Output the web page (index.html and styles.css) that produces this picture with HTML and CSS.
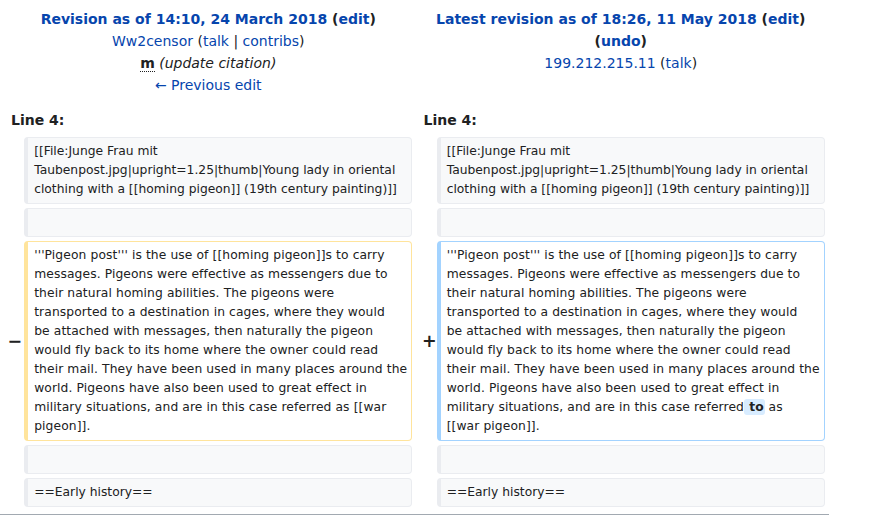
FILE: index.html
```html
<!DOCTYPE html>
<html>
<head>
<meta charset="utf-8">
<link rel="stylesheet" href="styles.css">
</head>
<body>
<div class="page">
<table class="diff">
  <colgroup>
    <col class="col-marker">
    <col class="col-content">
    <col class="col-marker">
    <col class="col-content">
  </colgroup>
  <tr class="title-row">
    <td colspan="2" class="title">
      <div><strong><a href="#">Revision as of 14:10, 24 March 2018</a> (<a href="#">edit</a>)</strong></div>
      <div><a href="#">Ww2censor</a> (<a href="#">talk</a> | <a href="#">contribs</a>)</div>
      <div><abbr class="minor">m</abbr> <span class="comment">(update citation)</span></div>
      <div><a href="#">← Previous edit</a></div>
    </td>
    <td colspan="2" class="title">
      <div><strong><a href="#">Latest revision as of 18:26, 11 May 2018</a> (<a href="#">edit</a>)</strong> <strong>(<a href="#">undo</a>)</strong></div>
      <div><a href="#">199.212.215.11</a> (<a href="#">talk</a>)</div>
    </td>
  </tr>
  <tr>
    <td colspan="2" class="lineno">Line 4:</td>
    <td colspan="2" class="lineno">Line 4:</td>
  </tr>
  <tr>
    <td class="marker"></td>
    <td class="cell context">[[File:Junge Frau mit Taubenpost.jpg|upright=1.25|thumb|Young lady in oriental clothing with a [[homing pigeon]] (19th century painting)]]</td>
    <td class="marker"></td>
    <td class="cell context">[[File:Junge Frau mit Taubenpost.jpg|upright=1.25|thumb|Young lady in oriental clothing with a [[homing pigeon]] (19th century painting)]]</td>
  </tr>
  <tr>
    <td class="marker"></td>
    <td class="cell context">&nbsp;</td>
    <td class="marker"></td>
    <td class="cell context">&nbsp;</td>
  </tr>
  <tr>
    <td class="marker"><span class="sign minus">−</span></td>
    <td class="cell deleted">'''Pigeon post''' is the use of [[homing pigeon]]s to carry<br>messages. Pigeons were effective as messengers due to<br>their natural homing abilities. The pigeons were<br>transported to a destination in cages, where they would<br>be attached with messages, then naturally the pigeon<br>would fly back to its home where the owner could read<br>their mail. They have been used in many places around the<br>world. Pigeons have also been used to great effect in<br>military situations, and are in this case referred as [[war<br>pigeon]].</td>
    <td class="marker"><span class="sign plus">+</span></td>
    <td class="cell added">'''Pigeon post''' is the use of [[homing pigeon]]s to carry<br>messages. Pigeons were effective as messengers due to<br>their natural homing abilities. The pigeons were<br>transported to a destination in cages, where they would<br>be attached with messages, then naturally the pigeon<br>would fly back to its home where the owner could read<br>their mail. They have been used in many places around the<br>world. Pigeons have also been used to great effect in<br>military situations, and are in this case referred<ins class="change"> to</ins> as<br>[[war pigeon]].</td>
  </tr>
  <tr>
    <td class="marker"></td>
    <td class="cell context">&nbsp;</td>
    <td class="marker"></td>
    <td class="cell context">&nbsp;</td>
  </tr>
  <tr>
    <td class="marker"></td>
    <td class="cell context">==Early history==</td>
    <td class="marker"></td>
    <td class="cell context">==Early history==</td>
  </tr>
</table>
<div class="rule"></div>
</div>
</body>
</html>
```

FILE: styles.css
```css
html, body {
  margin: 0;
  padding: 0;
  background: #ffffff;
}
body {
  font-family: "DejaVu Sans", sans-serif;
  font-size: 14px;
  color: #202122;
}
.page {
  width: 829px;
}
a {
  color: #0645ad;
  text-decoration: none;
}
.diff {
  width: 100%;
  table-layout: fixed;
  border-collapse: separate;
  border-spacing: 4px;
  margin: 0;
}
.col-marker { width: 2%; }
.col-content { width: 48%; }
.diff td {
  padding: 4.6px 7px;
}
.diff td.title {
  text-align: center;
  vertical-align: top;
  line-height: 22.3px;
  padding-top: 3.6px;
}
.title strong { font-weight: bold; }
.minor {
  font-weight: bold;
  text-decoration: none;
  border-bottom: 1px dotted #202122;
  cursor: help;
}
.comment {
  font-style: italic;
  color: #202122;
}
.diff td.lineno {
  font-weight: bold;
  line-height: 20px;
  padding-top: 5px;
  padding-bottom: 3px;
}
.diff td.cell {
  font-size: 12.3px;
  line-height: 19px;
  padding: 4px 6px;
  border-style: solid;
  border-width: 1px 1px 1px 4px;
  border-radius: 4px;
  vertical-align: top;
  white-space: pre-wrap;
  overflow-wrap: break-word;
}
.context {
  background: #f8f9fa;
  border-color: #eaecf0;
}
.diff td.deleted,
.diff td.added {
  letter-spacing: 0.1px;
  white-space: nowrap;
}
.deleted {
  background: #ffffff;
  border-color: #ffe49c;
}
.added {
  background: #ffffff;
  border-color: #a3d3ff;
}
.diff td.marker {
  padding: 0;
  text-align: right;
  font-weight: bold;
  font-size: 17.5px;
  line-height: 1.2;
  vertical-align: middle;
  color: #202122;
}
.sign.minus { margin-right: -2px; }
.sign.plus { margin-right: -4px; }
.change {
  text-decoration: none;
  font-weight: bold;
  letter-spacing: 0;
  background: #d8ecff;
  border-radius: 3px;
  padding: 1px 1px;
}
.rule {
  margin-top: 3px;
  border-top: 1px solid #a2a9b1;
}
```
